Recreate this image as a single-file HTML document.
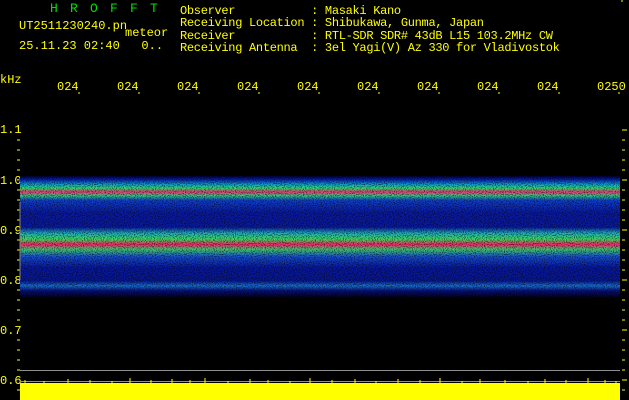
<!DOCTYPE html>
<html><head><meta charset="utf-8"><style>
html,body{margin:0;padding:0;background:#000;width:629px;height:400px;overflow:hidden}
.t{position:absolute;font-family:"Liberation Mono",monospace;font-size:12px;color:#ffff00;white-space:pre;line-height:12.3px}
.g{color:#00e000}
.x{position:absolute;top:80px;font-family:"Liberation Mono",monospace;font-size:12px;color:#ffff00}
</style></head><body>
<div class="t g" style="left:50px;top:3px;font-size:13px;letter-spacing:12.2px">HROFFT</div>
<div class="t" style="left:19px;top:20px">UT2511230240.pn</div>
<div class="t" style="left:125px;top:27px">meteor</div>
<div class="t" style="left:19px;top:40px">25.11.23 02:40   0..</div>
<div class="t" style="left:180px;top:5px;letter-spacing:-0.3px">Observer           : Masaki Kano
Receiving Location : Shibukawa, Gunma, Japan
Receiver           : RTL-SDR SDR# 43dB L15 103.2MHz CW
Receiving Antenna  : 3el Yagi(V) Az 330 for Vladivostok</div>
<div class="t" style="left:0;top:74px">kHz</div>
<div class="x" style="left:57px">024</div>
<div class="x" style="left:117px">024</div>
<div class="x" style="left:177px">024</div>
<div class="x" style="left:237px">024</div>
<div class="x" style="left:297px">024</div>
<div class="x" style="left:357px">024</div>
<div class="x" style="left:417px">024</div>
<div class="x" style="left:477px">024</div>
<div class="x" style="left:537px">024</div>
<div class="x" style="left:597px">0250</div>
<div class="t" style="left:0;top:124px">1.1</div>
<div class="t" style="left:0;top:175px">1.0</div>
<div class="t" style="left:0;top:225px">0.9</div>
<div class="t" style="left:0;top:275px">0.8</div>
<div class="t" style="left:0;top:325px">0.7</div>
<div class="t" style="left:0;top:375px">0.6</div>
<svg width="629" height="400" style="position:absolute;left:0;top:0">
<defs>
<linearGradient id="sp" x1="0" y1="0" x2="0" y2="1">
<stop offset="0" stop-color="#000030"/>
<stop offset="0.03" stop-color="#0820b0"/>
<stop offset="0.07" stop-color="#10a0d0"/>
<stop offset="0.10" stop-color="#30e070"/>
<stop offset="0.13" stop-color="#ff3080"/>
<stop offset="0.16" stop-color="#30d080"/>
<stop offset="0.20" stop-color="#1040d0"/>
<stop offset="0.30" stop-color="#0a1aa0"/>
<stop offset="0.42" stop-color="#0a1aa0"/>
<stop offset="0.47" stop-color="#20b0c0"/>
<stop offset="0.52" stop-color="#40e060"/>
<stop offset="0.56" stop-color="#ff2070"/>
<stop offset="0.60" stop-color="#40d070"/>
<stop offset="0.66" stop-color="#1850d0"/>
<stop offset="0.75" stop-color="#0818a0"/>
<stop offset="0.86" stop-color="#081890"/>
<stop offset="0.90" stop-color="#1870d0"/>
<stop offset="0.94" stop-color="#081080"/>
<stop offset="1" stop-color="#000010"/>
</linearGradient>
<filter id="nz" x="0" y="0" width="100%" height="100%">
<feTurbulence type="fractalNoise" baseFrequency="0.9 0.9" numOctaves="1" seed="3"/>
<feColorMatrix type="matrix" values="0 0 0 0 0  0 0 0 0 0  0 0 0 0 0  0 0 0 -4 2.2"/>
</filter>
</defs>
<rect x="20" y="176" width="600" height="122" fill="url(#sp)"/>
<rect x="20" y="176" width="600" height="122" filter="url(#nz)" opacity="0.6"/>
<g stroke="#ffff00" stroke-width="1">
<path d="M17 140h3M17 150h3M17 160h3M17 170h3M17 190h3M17 200h3M17 210h3M17 220h3M17 240h3M17 250h3M17 260h3M17 270h3M17 290h3M17 300h3M17 310h3M17 320h3M17 340h3M17 350h3M17 360h3M17 370h3M17 390h3"/>
<path d="M622 130h5M622 140h3M622 150h3M622 160h3M622 170h3M622 180h5M622 190h3M622 200h3M622 210h3M622 220h3M622 230h5M622 240h3M622 250h3M622 260h3M622 270h3M622 280h5M622 290h3M622 300h3M622 310h3M622 320h3M622 330h5M622 340h3M622 350h3M622 360h3M622 370h3M622 380h5M622 390h3M622 0v2"/>
<path d="M79 92v2M139 92v2M199 92v2M259 92v2M319 92v2M379 92v2M439 92v2M499 92v2M559 92v2M619 92v2"/>
</g>
<line x1="20" y1="202" x2="20" y2="280" stroke="#808080"/>
<line x1="20" y1="370.5" x2="620" y2="370.5" stroke="#909090"/>
<line x1="20" y1="381.5" x2="620" y2="381.5" stroke="#909090"/>
<rect x="20" y="383" width="600" height="17" fill="#ffff00"/>
<path stroke="#ffff00" stroke-width="1" d="M25 380v3M44 381v2M68 379v4M90 380v3M112 381v2M130 378v5M151 380v3M172 379v4M190 380v3M205 378v5M228 381v2M250 379v4M268 380v3M290 381v2M310 378v5M332 380v3M355 379v4M376 381v2M398 379v4M420 380v3M440 378v5M462 381v2M480 379v4M505 380v3M528 381v2M545 379v4M566 380v3M588 378v5M605 380v3M616 381v2"/>
</svg>
</body></html>
